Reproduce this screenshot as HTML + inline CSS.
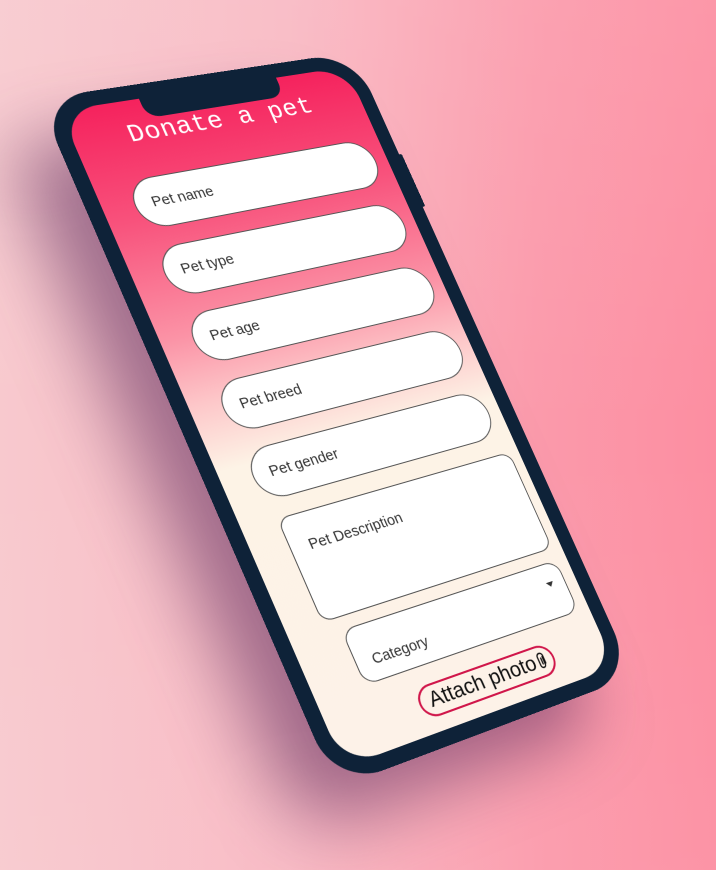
<!DOCTYPE html>
<html><head><meta charset="utf-8">
<style>
html,body{margin:0;padding:0;}
body{width:716px;height:870px;overflow:hidden;position:relative;
background:linear-gradient(90deg,#f8c9ce 0%,#f9b9c3 40%,#fb9aab 75%,#fc8ea1 100%);
font-family:"Liberation Sans",sans-serif;}
.bgv{position:absolute;inset:0;background:linear-gradient(180deg,rgba(255,255,255,0.08),rgba(255,255,255,0) 50%,rgba(255,255,255,0.05));}
.sw{position:absolute;left:0;top:0;transform:translate(-34px,48px);}
.shadow{position:absolute;left:0;top:0;width:330px;height:700px;transform-origin:0 0;
transform:matrix3d(1.05921,-0.12700,0,0.00029652,0.40881,0.94464,0,-0.00005031,0,0,1,0,38,99,0,1);
background:rgba(90,40,90,0.55);border-radius:50px;filter:blur(34px);}
.phone{position:absolute;left:0;top:0;width:330px;height:700px;transform-origin:0 0;
transform:matrix3d(1.05921,-0.12700,0,0.00029652,0.40881,0.94464,0,-0.00005031,0,0,1,0,38,99,0,1);
background:#0e2238;border-radius:48px;}
.btn{position:absolute;left:328px;top:118px;width:5px;height:60px;background:#0e2238;border-radius:2px;}
.screen{position:absolute;left:15px;top:15px;right:15px;bottom:15px;border-radius:36px;overflow:hidden;
background:linear-gradient(180deg,#f5225d 0%,#f8527c 18%,#fb93a6 36%,#fdc7c9 46%,#fdf3e6 56%,#fdf2e8 100%);}
.notch{position:absolute;left:78px;top:0;width:144px;height:21px;background:#0e2238;border-radius:0 0 14px 14px;}
.title{position:absolute;left:0;right:0;top:20px;text-align:center;color:#fff;
font-family:"Liberation Mono","DejaVu Sans Mono",monospace;font-size:26px;letter-spacing:0.5px;}
.f{position:absolute;left:31px;width:256px;height:52px;background:#fff;border:1px solid #555;
border-radius:27px;box-sizing:border-box;font-size:14.5px;color:#333;padding-left:16px;line-height:50px;}
.desc{position:absolute;left:36px;width:254px;top:432px;height:106px;background:#fff;border:1px solid #555;
border-radius:12px;box-sizing:border-box;font-size:14.5px;color:#333;padding:24px 0 0 18px;}
.cat{position:absolute;left:50px;width:238px;top:550px;height:56px;background:#fff;border:1px solid #555;
border-radius:14px;box-sizing:border-box;font-size:14.5px;color:#333;padding-left:16px;line-height:70px;}
.tri{position:absolute;right:12px;top:18px;width:0;height:0;border-left:4px solid transparent;border-right:4px solid transparent;border-top:5px solid #333;}
.attach{position:absolute;left:92px;top:624px;width:150px;height:32px;border:2px solid #d0164a;border-radius:17px;
box-sizing:border-box;font-size:21px;color:#111;line-height:28px;padding-left:9px;white-space:nowrap;}
.attach svg{position:absolute;right:7px;top:5px;}
</style></head><body>
<div class="bgv"></div>
<div class="sw"><div class="shadow"></div></div>
<div class="phone">
  <div class="btn"></div>
  <div class="screen">
    <div class="notch"></div>
    <div class="title">Donate a pet</div>
    <div class="f" style="top:80px">Pet name</div>
    <div class="f" style="top:151px">Pet type</div>
    <div class="f" style="top:221px">Pet age</div>
    <div class="f" style="top:292px">Pet breed</div>
    <div class="f" style="top:362px">Pet gender</div>
    <div class="desc">Pet Description</div>
    <div class="cat">Category<div class="tri"></div></div>
    <div class="attach">Attach photo
      <svg width="10" height="18" viewBox="0 0 10 18"><path d="M7 5 V13 A2.5 2.5 0 0 1 2 13 V4 A3 3 0 0 1 8 4 V12" fill="none" stroke="#111" stroke-width="1.4" stroke-linecap="round"/><path d="M5 6 V12" fill="none" stroke="#111" stroke-width="1.4" stroke-linecap="round"/></svg>
    </div>
  </div>
</div>
</body></html>
